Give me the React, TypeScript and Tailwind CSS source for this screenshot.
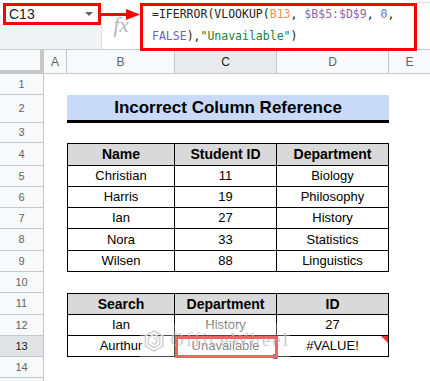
import React from "react";

const cellBase = "flex items-center justify-center border-b border-r border-black";

const RowHead = ({ n, active }: { n?: number; active?: boolean }) => (
  <div
    className={`w-[44px] shrink-0 flex items-center justify-center border-r border-b border-[#c7c7c7] text-[11px] ${
      active ? "bg-[#e1e3e6] text-[#202124]" : "bg-[#f8f9fa] text-[#5f6368]"
    }`}
  >
    {n}
  </div>
);

type Cell = { text: string; grey?: boolean };

const TableRow = ({
  n,
  h,
  cells,
  header,
  top,
}: {
  n: number;
  h: string;
  cells: Cell[];
  header?: boolean;
  top?: boolean;
}) => {
  const widths = ["w-[108px] border-l", "w-[102px]", "w-[112px]"];
  return (
    <div className={`flex ${h}`}>
      <RowHead n={n} />
      <div className="w-[23px]" />
      {cells.map((c, i) => (
        <div
          key={i}
          className={`${cellBase} ${widths[i]} ${top ? "border-t" : ""} ${
            header ? "bg-[#d9d9d9] font-bold text-[14px]" : "text-[13px]"
          } ${c.grey ? "text-[#666666]" : "text-black"}`}
        >
          {c.text}
        </div>
      ))}
      <div className="flex-1" />
    </div>
  );
};

const EmptyRow = ({ n, h }: { n?: number; h: string }) => (
  <div className={`flex ${h}`}>
    <RowHead n={n} />
    <div className="flex-1" />
  </div>
);

const students = [
  { name: "Christian", id: "11", dept: "Biology" },
  { name: "Harris", id: "19", dept: "Philosophy" },
  { name: "Ian", id: "27", dept: "History" },
  { name: "Nora", id: "33", dept: "Statistics" },
  { name: "Wilsen", id: "88", dept: "Linguistics" },
];
const studentHeights = ["h-[21px]", "h-[21px]", "h-[21px]", "h-[22px]", "h-[21px]"];

const Logo = () => (
  <svg width="30" height="34" viewBox="0 0 30 34" fill="none" stroke="#cfcfcf" strokeWidth="2.2">
    <path d="M15 2 L28 9.5 L28 24.5 L15 32 L2 24.5 L2 9.5 Z" />
    <path d="M15 7 L23.5 12 L23.5 22 L15 27 L6.5 22 L6.5 12 Z" />
    <path d="M15 12 L19 14.5 L19 19.5 L15 22 L11 19.5" />
  </svg>
);

export default function App() {
  return (
    <div className="relative w-[430px] h-[381px] overflow-hidden bg-white font-['Liberation_Sans',Arial,sans-serif]">
      {/* formula bar */}
      <div className="relative flex h-[50px] border-b border-[#c7c7c7]">
        <div className="w-[102px] flex flex-col">
          <div className="h-[25px] pl-[3px] pt-[3px] bg-white">
            <div className="w-[98px] h-[22px] border-[3px] border-[#ff0000] flex items-center justify-between pl-[3px] pr-[5px]">
              <span className="text-[14px] text-[#202124]">C13</span>
              <svg width="8" height="4" viewBox="0 0 8 4">
                <path d="M0 0 L8 0 L4 4 Z" fill="#5f6368" />
              </svg>
            </div>
          </div>
          <div className="flex-1 bg-[#f1f3f4] border-r border-[#dadce0]" />
        </div>
        <div className="w-[38px] flex items-center justify-center pt-[3px]">
          <span className="font-['Liberation_Serif',serif] italic text-[21px] text-[#b4b4b4]">fx</span>
        </div>
        <div className="relative z-10 w-[277px] h-[48px] mt-[3px] border-[3px] border-[#ff0000] bg-white pl-[9px] font-['DejaVu_Sans_Mono',monospace] text-[11.5px] text-[#222]">
          <div className="-mt-[3px] leading-[22px] whitespace-pre">
            <div>
              =IFERROR(VLOOKUP(<span className="text-[#f0915a]">B13</span>,{" "}
              <span className="text-[#8e6aa8]">$B$5:$D$9</span>, <span className="text-[#7b6fc0]">0</span>,
            </div>
            <div>
              <span className="text-[#6c5fd1]">FALSE</span>),<span className="text-[#188038]">"Unavailable"</span>)
            </div>
          </div>
        </div>
        <div className="flex-1 border-t border-[#dadce0] mt-[2px]" />
        {/* arrow */}
        <svg className="absolute left-[101px] top-[9px]" width="40" height="11" viewBox="0 0 40 11">
          <line x1="0" y1="5.5" x2="27" y2="5.5" stroke="#ff0000" strokeWidth="3" />
          <path d="M25 0 L39 5.5 L25 11 Z" fill="#ff0000" />
        </svg>
      </div>

      {/* column headers */}
      <div className="flex h-[24px] text-[12px] text-[#5f6368]">
        <div className="w-[44px] bg-[#f8f9fa] border-r-[4px] border-b-[4px] border-[#c7c7c7]" />
        {[
          ["A", "w-[23px]", false],
          ["B", "w-[108px]", false],
          ["C", "w-[102px]", true],
          ["D", "w-[112px]", false],
        ].map(([l, w, act]) => (
          <div
            key={l as string}
            className={`${w} flex items-center justify-center border-r border-b border-[#c7c7c7] ${
              act ? "bg-[#e8eaed] text-[#202124]" : "bg-[#f8f9fa]"
            }`}
          >
            {l}
          </div>
        ))}
        <div className="flex-1 flex items-center justify-center bg-[#f8f9fa] border-b border-[#c7c7c7]">E</div>
      </div>

      {/* rows */}
      <EmptyRow n={1} h="h-[21px]" />
      <div className="flex h-[28px]">
        <RowHead n={2} />
        <div className="w-[23px]" />
        <div className="w-[322px] bg-[#c9daf8] border-b-[3px] border-black flex items-center justify-center font-bold text-[17px] text-black">
          Incorrect Column Reference
        </div>
        <div className="flex-1" />
      </div>
      <EmptyRow n={3} h="h-[20px]" />
      <TableRow
        n={4}
        h="h-[23px]"
        header
        top
        cells={[{ text: "Name" }, { text: "Student ID" }, { text: "Department" }]}
      />
      {students.map((s, i) => (
        <TableRow
          key={s.name}
          n={5 + i}
          h={studentHeights[i]}
          cells={[{ text: s.name }, { text: s.id }, { text: s.dept }]}
        />
      ))}
      <EmptyRow n={10} h="h-[21px]" />
      <TableRow
        n={11}
        h="h-[22px]"
        header
        top
        cells={[{ text: "Search" }, { text: "Department" }, { text: "ID" }]}
      />
      <TableRow
        n={12}
        h="h-[21px]"
        cells={[{ text: "Ian" }, { text: "History", grey: true }, { text: "27" }]}
      />
      <div className="flex h-[21px]">
        <RowHead n={13} active />
        <div className="w-[23px]" />
        <div className={`${cellBase} w-[108px] border-l text-[13px] text-black`}>Aurthur</div>
        <div className={`${cellBase} relative w-[102px] text-[13px] text-[#555555]`}>
          Unavailable
          <div className="absolute left-[98px] top-[18px] w-[5px] h-[5px] bg-[#4a86e8] z-20" />
          <div className="absolute left-0 top-0 w-[103px] h-[22px] border-[3px] border-[#f26464] z-30" />
        </div>
        <div className={`${cellBase} relative w-[112px] text-[13px] text-black`}>
          #VALUE!
          <div className="absolute top-0 right-0 w-0 h-0 border-l-[7px] border-l-transparent border-t-[7px] border-t-[#e53935]" />
        </div>
        <div className="flex-1" />
      </div>
      <EmptyRow n={14} h="h-[21px]" />
      <EmptyRow h="h-[21px]" />

      {/* watermark */}
      <div className="absolute left-[140px] top-[323px] w-[150px] h-[35px] z-10 bg-white/30 flex items-center gap-[6px] pl-[4px]">
        <Logo />
        <span className="font-['Liberation_Serif',serif] text-[19px] tracking-[2px] text-[#c2c2c2]/80">
          OfficeWheel
        </span>
      </div>
    </div>
  );
}
